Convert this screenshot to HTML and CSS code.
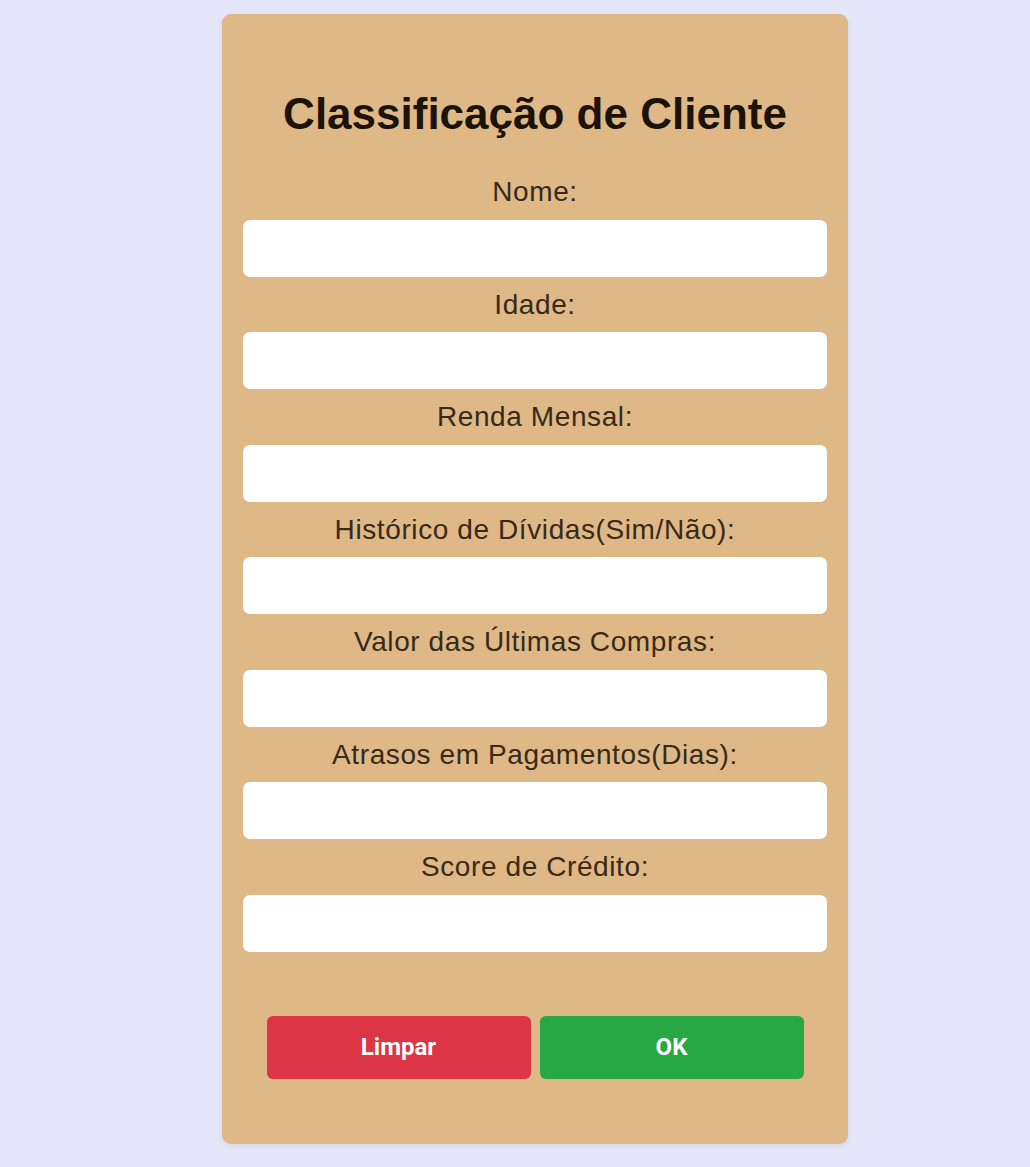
FILE: index.html
```html
<!DOCTYPE html>
<html lang="pt-BR">
<head>
<meta charset="utf-8">
<title>Classificação de Cliente</title>
<link rel="stylesheet" href="styles.css">
</head>
<body>
<main class="card">
  <h1 class="title">Classificação de Cliente</h1>
  <form class="form">
    <label class="label" for="nome">Nome:</label>
    <input class="field" id="nome" type="text">
    <label class="label" for="idade">Idade:</label>
    <input class="field" id="idade" type="text">
    <label class="label" for="renda">Renda Mensal:</label>
    <input class="field" id="renda" type="text">
    <label class="label" for="hist">Histórico de Dívidas(Sim/Não):</label>
    <input class="field" id="hist" type="text">
    <label class="label" for="valor">Valor das Últimas Compras:</label>
    <input class="field" id="valor" type="text">
    <label class="label" for="atrasos">Atrasos em Pagamentos(Dias):</label>
    <input class="field" id="atrasos" type="text">
    <label class="label" for="score">Score de Crédito:</label>
    <input class="field" id="score" type="text">
    <div class="actions">
      <button class="btn btn-clear" type="reset">Limpar</button>
      <button class="btn btn-ok" type="button">OK</button>
    </div>
  </form>
</main>
</body>
</html>
```
FILE: styles.css
```css
html, body {
  margin: 0;
  padding: 0;
}
body {
  background: #e6e6fa;
  font-family: "Liberation Sans", Arial, sans-serif;
  display: flex;
  justify-content: center;
  padding: 14px 0 0 40px;
  min-height: 1167px;
  box-sizing: border-box;
}
.card {
  width: 626px;
  height: 1130px;
  box-sizing: border-box;
  background: #deb887;
  border-radius: 9px;
  padding: 0 21px;
  box-shadow: 0 2px 6px rgba(0, 0, 0, 0.08);
}
.title {
  margin: 69px 0 19px;
  height: 62px;
  line-height: 62px;
  font-size: 44px;
  font-weight: bold;
  color: #1c1208;
  text-align: center;
}
.form {
  display: flex;
  flex-direction: column;
}
.label {
  display: block;
  height: 55.5px;
  line-height: 55px;
  font-size: 28px;
  letter-spacing: 0.6px;
  color: #382a17;
  text-align: center;
}
.field {
  display: block;
  height: 57px;
  box-sizing: border-box;
  border: none;
  border-radius: 7px;
  background: #fff;
  margin: 0;
  padding: 0 12px;
  font-size: 24px;
}
.actions {
  display: flex;
  justify-content: center;
  gap: 9px;
  margin-top: 64px;
}
.btn {
  width: 264px;
  height: 63px;
  border: none;
  border-radius: 6px;
  color: #fff;
  font-family: Roboto, "Liberation Sans", sans-serif;
  font-weight: bold;
  font-size: 24px;
  cursor: pointer;
}
.btn-clear {
  background: #dc3545;
}
.btn-ok {
  background: #28a745;
}
```
